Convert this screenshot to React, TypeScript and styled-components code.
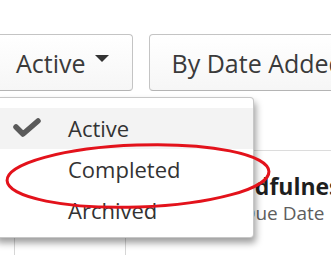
import React from "react";
import styled, { createGlobalStyle } from "styled-components";

const GlobalStyle = createGlobalStyle`
  html, body {
    margin: 0;
    padding: 0;
    background: #fff;
    font-family: "Open Sans", "Liberation Sans", sans-serif;
    overflow: hidden;
  }
`;

const Page = styled.div`
  position: relative;
  width: 331px;
  height: 255px;
  overflow: hidden;
`;

const Toolbar = styled.div`
  display: flex;
  gap: 16px;
  padding-top: 34px;
  margin-left: -6px;
  white-space: nowrap;
`;

const FilterButton = styled.div<{ $padLeft: number; $padRight: number }>`
  position: relative;
  display: inline-flex;
  align-items: center;
  gap: 9px;
  height: 57px;
  box-sizing: border-box;
  padding: 0 ${(p) => p.$padRight}px 0 ${(p) => p.$padLeft}px;
  border: 1px solid #c4c4c4;
  border-bottom-color: #b4b4b4;
  border-radius: 4px;
  background: linear-gradient(#ffffff, #f6f6f6);
  color: #3a3a3a;
  font-size: 25px;
  flex-shrink: 0;
`;

const Caret = styled.span`
  width: 0;
  height: 0;
  border-left: 7px solid transparent;
  border-right: 7px solid transparent;
  border-top: 7px solid #333;
  margin-bottom: 8px;
`;

const Menu = styled.ul`
  position: absolute;
  left: -6px;
  top: 97px;
  width: 260px;
  box-sizing: border-box;
  margin: 0;
  padding: 10px 0 6px;
  list-style: none;
  background: #fff;
  border: 1px solid rgba(0, 0, 0, 0.22);
  border-radius: 4px;
  box-shadow: 2px 5px 7px rgba(0, 0, 0, 0.38);
  z-index: 2;
`;

const MenuItem = styled.li<{ $active?: boolean }>`
  position: relative;
  padding-left: 73px;
  line-height: 41px;
  font-size: 22px;
  color: #333;
  background: ${(p) => (p.$active ? "#f3f3f3" : "transparent")};
`;

const Check = styled.svg`
  position: absolute;
  left: 18px;
  top: 10px;
`;

const ListRow = styled.div`
  display: flex;
  margin-top: 59px;
  padding: 22px 0 0 14px;
  border-top: 1px solid #dcdcdc;
  white-space: nowrap;
`;

const Thumb = styled.div`
  width: 112px;
  height: 120px;
  box-sizing: border-box;
  border: 1px solid #d6d6d6;
  flex-shrink: 0;
`;

const Info = styled.div`
  margin-left: 85px;
  display: flex;
  flex-direction: column;
`;

const Title = styled.div`
  font-weight: 700;
  font-size: 23px;
  line-height: 27px;
  color: #1e1e1e;
`;

const Sub = styled.div`
  font-size: 19px;
  line-height: 26px;
  color: #5e5e5e;
`;

const Annotation = styled.svg`
  position: absolute;
  left: 0;
  top: 0;
  pointer-events: none;
  z-index: 3;
`;

export default function App() {
  return (
    <Page>
      <GlobalStyle />
      <Toolbar>
        <FilterButton $padLeft={21} $padRight={23}>
          Active
          <Caret />
        </FilterButton>
        <FilterButton $padLeft={22} $padRight={22}>
          By Date Added
          <Caret />
        </FilterButton>
      </Toolbar>
      <ListRow>
        <Thumb />
        <Info>
          <Title>Mindfulness</Title>
          <Sub>No Due Date</Sub>
        </Info>
      </ListRow>
      <Menu>
        <MenuItem $active>
          <Check width="28" height="19" viewBox="0 0 28 19">
            <polyline
              points="3,9 10,16 25,3"
              fill="none"
              stroke="#5a5a5a"
              strokeWidth="5.5"
              strokeLinecap="round"
              strokeLinejoin="round"
            />
          </Check>
          Active
        </MenuItem>
        <MenuItem>Completed</MenuItem>
        <MenuItem>Archived</MenuItem>
      </Menu>
      <Annotation width="331" height="255" viewBox="0 0 331 255">
        <ellipse
          cx="138"
          cy="176"
          rx="131"
          ry="31"
          transform="rotate(-2 138 176)"
          fill="none"
          stroke="#e3121b"
          strokeWidth="3"
        />
      </Annotation>
    </Page>
  );
}
